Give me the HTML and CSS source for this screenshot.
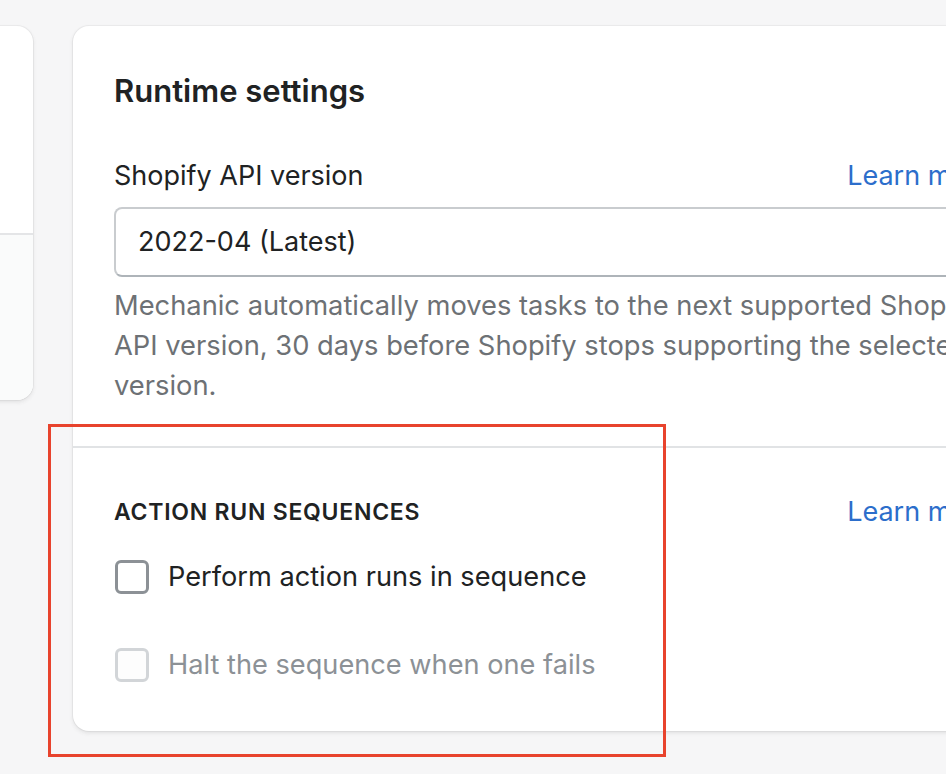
FILE: index.html
```html
<!DOCTYPE html>
<html lang="en">
<head>
<meta charset="utf-8">
<title>Runtime settings</title>
<link rel="stylesheet" href="styles.css">
</head>
<body>
<div class="page">
  <div class="side-card">
    <div class="side-top"></div>
    <div class="side-bottom"></div>
  </div>
  <div class="card">
    <div class="section">
      <h2 class="title">Runtime settings</h2>
      <div class="label-row">
        <label class="label">Shopify API version</label>
        <a class="link" href="#">Learn more</a>
      </div>
      <div class="select">2022-04 (Latest)</div>
      <p class="help">Mechanic automatically moves tasks to the next supported Shopify API version, 30 days before Shopify stops supporting the selected version.</p>
    </div>
    <div class="section section-2">
      <div class="label-row heading-row">
        <h3 class="subheading">ACTION RUN SEQUENCES</h3>
        <a class="link" href="#">Learn more</a>
      </div>
      <div class="check-row">
        <span class="box"></span>
        <span class="check-label">Perform action runs in sequence</span>
      </div>
      <div class="check-row disabled">
        <span class="box"></span>
        <span class="check-label">Halt the sequence when one fails</span>
      </div>
    </div>
  </div>
</div>
<div class="highlight"></div>
</body>
</html>
```

FILE: styles.css
```css
html, body {
  margin: 0;
  padding: 0;
  background: #f6f6f7;
  overflow: hidden;
  width: 946px;
  height: 774px;
  font-family: Inter, "Noto Sans", sans-serif;
  color: #202223;
}

.page {
  display: flex;
  align-items: flex-start;
  gap: 40px;
  padding-top: 26px;
  margin-left: -200px;
}

.side-card {
  flex: none;
  width: 233px;
  height: 374px;
  background: #fff;
  border-radius: 16px;
  box-shadow: 0 0 0 1px rgba(63,63,68,0.05), 0 2px 4px rgba(63,63,68,0.12);
  overflow: hidden;
  display: flex;
  flex-direction: column;
}
.side-top { height: 207px; border-bottom: 2px solid #e4e5e7; }
.side-bottom { flex: 1; background: #fafbfb; }

.card {
  flex: none;
  width: 960px;
  height: 705px;
  background: #fff;
  border-radius: 16px;
  box-shadow: 0 0 0 1px rgba(63,63,68,0.05), 0 2px 4px rgba(63,63,68,0.12);
}

.section {
  padding: 40px 40px 40px 41px;
}
.section-2 {
  border-top: 2px solid #e1e3e5;
  padding-top: 40px;
}

.title {
  margin: 0;
  font-size: 31px;
  line-height: 50px;
  font-weight: 600;
  letter-spacing: 0;
}

.label-row {
  display: flex;
  justify-content: space-between;
  align-items: center;
  margin-top: 40px;
  height: 40px;
}
.heading-row { margin-top: 0; height: 48px; }

.label {
  font-size: 27px;
  line-height: 40px;
}

.link {
  font-size: 27px;
  line-height: 40px;
  color: #2c6ecb;
  text-decoration: none;
}

.select {
  margin-top: 11px;
  height: 66px;
  border: 2px solid #c9cccf;
  border-bottom-color: #aeb4b9;
  border-radius: 8px;
  box-sizing: content-box;
  padding: 0 22px;
  font-size: 27px;
  line-height: 66px;
}

.help {
  margin: 9px 0 0;
  font-size: 27.3px;
  line-height: 40px;
  color: #6d7175;
  width: 880px;
}

.subheading {
  margin: 0;
  font-size: 23px;
  line-height: 48px;
  font-weight: 600;
  letter-spacing: 0.75px;
}

.check-row {
  display: flex;
  align-items: center;
  gap: 19px;
  height: 40px;
  margin-top: 21px;
}
.check-row.disabled { margin-top: 48px; }

.box {
  flex: none;
  width: 28px;
  height: 28px;
  margin-left: 1px;
  border: 3px solid #8c9196;
  border-radius: 6px;
  background: #fff;
}
.check-label {
  font-size: 27.2px;
  line-height: 40px;
}
.disabled .box { border-color: #d2d5d8; background: #fdfdfd; }
.disabled .check-label { color: #8c9196; }

.highlight {
  position: absolute;
  left: 48px;
  top: 424px;
  width: 612px;
  height: 327px;
  border: 3px solid #e8432d;
}
```
